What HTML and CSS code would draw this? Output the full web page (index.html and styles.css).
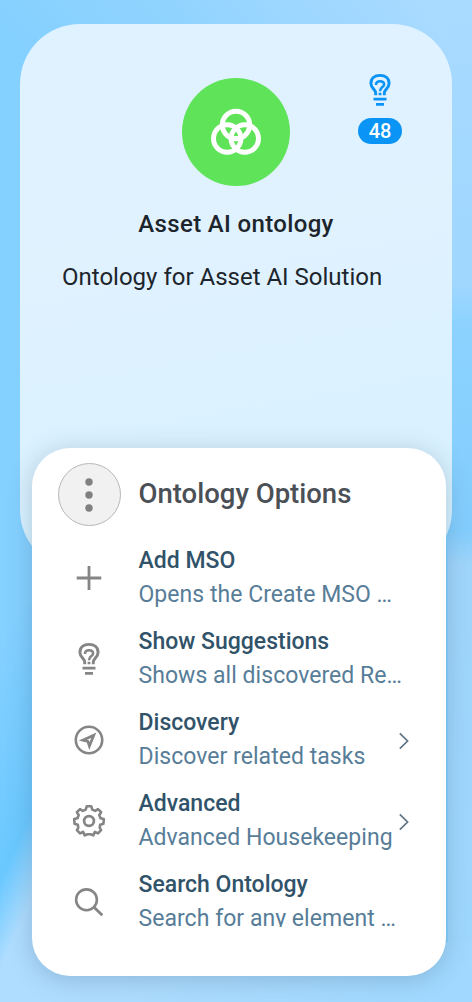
FILE: index.html
```html
<!DOCTYPE html>
<html lang="en">
<head>
<meta charset="utf-8">
<title>Asset AI ontology</title>
<link rel="stylesheet" href="styles.css">
</head>
<body>
<svg width="0" height="0" class="defs">
  <symbol id="bulb" viewBox="0 0 24 36">
    <g fill="none" stroke="currentColor">
      <path stroke-width="2.9" d="M7.7 23.2V21C7.7 18 2.9 15.6 2.9 11.4C2.9 6 6.8 3.4 12 3.4S21.1 6 21.1 11.4C21.1 15.6 16.3 18 16.3 21V23.2"/>
      <path stroke-width="2.6" d="M8 12.9C8 10.7 9.4 9.3 12 9.3S16.1 10.7 16.1 12.5C16.1 15.3 12 15 12 19.3"/>
      <path stroke-width="2.7" d="M10.6 22H13.4M5.5 27.2H18.5M8 32.3H16"/>
    </g>
  </symbol>
</svg>
<main class="stage">
  <section class="card">
    <div class="avatar">
      <svg class="venn" width="54" height="54" viewBox="0 0 54 54" fill="none" stroke="#fff" stroke-width="5"><circle cx="27" cy="18" r="13.7"/><circle cx="18.2" cy="31.5" r="13.7"/><circle cx="35.8" cy="31.5" r="13.7"/><path stroke-width="3" d="M22 30.8H32"/></svg>
    </div>
    <div class="hint">
      <svg class="bulb" width="24" height="36"><use href="#bulb"/></svg>
      <span class="badge">48</span>
    </div>
    <h1 class="name">Asset AI ontology</h1>
    <p class="about">Ontology for Asset AI Solution</p>
  </section>
  <section class="menu">
    <header class="head">
      <button class="more" aria-label="Options"><svg class="dots" width="10" height="36" viewBox="0 0 10 36" fill="#808080"><circle cx="5" cy="5" r="3.7"/><circle cx="5" cy="18" r="3.7"/><circle cx="5" cy="31" r="3.7"/></svg></button>
      <h2 class="heading">Ontology Options</h2>
    </header>
    <ul class="list">
      <li class="row">
        <svg class="icon" viewBox="0 0 36 36"><path stroke-width="2.8" d="M18 6V30M5.7 18H30.3"/></svg>
        <div class="text"><strong class="title">Add MSO</strong><span class="desc">Opens the Create MSO …</span></div>
      </li>
      <li class="row">
        <svg class="bulb gray" width="24" height="36"><use href="#bulb"/></svg>
        <div class="text"><strong class="title">Show Suggestions</strong><span class="desc">Shows all discovered Re…</span></div>
      </li>
      <li class="row">
        <svg class="icon" viewBox="0 0 36 36"><circle cx="18" cy="18" r="13.2" stroke-width="2.6"/><path stroke-width="2.7" d="M22.8 13.2L11.8 18.2L16.9 19.5L18.4 24Z"/></svg>
        <div class="text"><strong class="title">Discovery</strong><span class="desc">Discover related tasks</span></div>
        <svg class="chevron" viewBox="0 0 12 18"><path d="M1.8 1.3L9.6 9L1.8 16.7"/></svg>
      </li>
      <li class="row">
        <svg class="icon" viewBox="0 0 36 36"><circle cx="18" cy="18" r="4.9" stroke-width="2.7"/><path stroke-width="2.6" stroke-linejoin="round" d="M14.7 6.6L15.8 3.2H20.2L21.3 6.6L24.2 7.9L27 6.1L30.1 9.2L28.3 12L29.5 15.2L32.8 16L32.4 20.8L29.2 21.8L28.7 24.6L30.1 27.2L27 30.4L23.9 28.8L22.3 32.4L19.4 31.2H16.6L13.7 32.4L12.1 28.8L9 30.4L5.9 27.2L7.3 24.6L6.8 21.8L3.6 20.8L3.2 16L6.5 15.2L7.7 12L5.9 9.2L9 6.1L11.8 7.9Z"/></svg>
        <div class="text"><strong class="title">Advanced</strong><span class="desc">Advanced Housekeeping</span></div>
        <svg class="chevron" viewBox="0 0 12 18"><path d="M1.8 1.3L9.6 9L1.8 16.7"/></svg>
      </li>
      <li class="row">
        <svg class="icon" viewBox="0 0 36 36"><circle cx="15.5" cy="15.8" r="10.4" stroke-width="2.6"/><path stroke-width="2.8" d="M23 23.3L31.3 31.3"/></svg>
        <div class="text"><strong class="title">Search Ontology</strong><span class="desc">Search for any element …</span></div>
      </li>
    </ul>
  </section>
</main>
</body>
</html>
```
FILE: styles.css
```css
* { box-sizing: border-box; }
body { margin: 0; font-family: Roboto, "Liberation Sans", sans-serif; }
.defs { position: absolute; }
.stage {
  position: relative;
  height: 1002px;
  padding: 24px 20px;
  overflow: hidden;
  background:
    linear-gradient(114.5deg, #84d0ff 20px, #6ac8ff 116px, #aeddff 152px) left bottom / 120px 400px no-repeat,
    linear-gradient(to right, #aeddff 100px, #a0d8ff) left bottom / 100% 60px no-repeat,
    linear-gradient(to bottom, #a9daff 0, #9fd7ff 285px, #8bd2ff 325px, #82cdfd 530px, #a0d5fb 565px, #9ed8ff) right top / 24px 100% no-repeat,
    linear-gradient(50deg, #84d0ff 62%, #8fd3ff 75%, #a9daff 96%);
}
.card {
  display: flex;
  flex-direction: column;
  align-items: center;
  position: relative;
  height: 546px;
  padding-top: 54px;
  border-radius: 60px;
  background: linear-gradient(170deg, #dff2ff 0%, #e1f2ff 40%, #daf1ff 70%, #d8f3ff 100%);
}
.avatar {
  display: grid;
  place-items: center;
  width: 108px;
  height: 108px;
  border-radius: 50%;
  background: #5fe459;
}
.venn { margin-top: 4px; }
.hint {
  position: absolute;
  top: 48px;
  right: 50px;
  display: grid;
  justify-items: center;
  gap: 10px;
  width: 44px;
  color: #0a94f5;
}
.bulb { display: block; }
.gray { color: #858585; justify-self: center; margin-right: 1.5px; }
.badge {
  width: 44px;
  height: 26px;
  border-radius: 13px;
  background: #0a94f5;
  color: #fff;
  font-size: 20px;
  font-weight: 500;
  line-height: 26px;
  text-align: center;
}
.name {
  margin: 21px 0 0;
  color: #1d252c;
  font-size: 24px;
  font-weight: 500;
  line-height: 34px;
  letter-spacing: .35px;
}
.about {
  align-self: flex-start;
  margin: 19px 0 0 42px;
  color: #1d252c;
  font-size: 24px;
  line-height: 34px;
  white-space: nowrap;
}
.menu {
  position: absolute;
  top: 448px;
  left: 32px;
  width: 414px;
  height: 528px;
  border-radius: 38px;
  background: #fff;
  box-shadow: 0 4px 24px rgba(60, 90, 115, .27);
}
.head, .row {
  display: grid;
  grid-template-columns: 63px 1fr;
  column-gap: 17.5px;
  align-items: center;
  padding-left: 26px;
}
.head { height: 89px; }
.more {
  display: grid;
  place-items: center;
  width: 63px;
  height: 63px;
  margin-top: 3px;
  padding: 0;
  border: 1px solid #b3b8ba;
  border-radius: 50%;
  background: #f1f1f1;
}
.dots { margin: 2px 2px 0 0; }
.heading {
  margin: 2px 0 0;
  color: #4a5056;
  font-size: 27.5px;
  font-weight: 500;
  line-height: 34px;
}
.list {
  height: 390px;
  margin: 0;
  padding: 0;
  overflow: hidden;
  list-style: none;
}
.row { position: relative; height: 81px; }
.icon {
  justify-self: center;
  width: 36px;
  height: 36px;
  margin-right: 1px;
  fill: none;
  stroke: #858585;
}
.text { display: grid; white-space: nowrap; margin-top: 1px; }
.title, .desc { justify-self: start; font-size: 23px; line-height: 34px; }
.title { color: #31536a; font-weight: 500; }
.desc { color: #577d98; letter-spacing: .04px; }
.chevron {
  position: absolute;
  top: 33px;
  right: 36px;
  width: 12px;
  height: 18px;
  fill: none;
  stroke: #5f7485;
  stroke-width: 1.7;
}
```
